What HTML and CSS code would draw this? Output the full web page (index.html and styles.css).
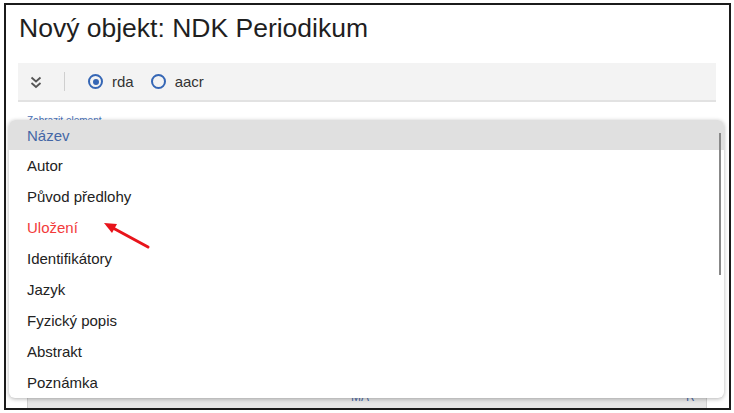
FILE: index.html
```html
<!DOCTYPE html>
<html lang="cs">
<head>
<meta charset="utf-8">
<title>Nový objekt</title>
<link rel="stylesheet" href="styles.css">
</head>
<body>
<div class="frame">
  <h1 class="title">Nový objekt: NDK Periodikum</h1>
  <div class="toolbar">
    <span class="expand">
      <svg width="12" height="13" viewBox="0 0 12 13"><path d="M1.5 1.5 L6 5.5 L10.5 1.5 M1.5 7 L6 11 L10.5 7" fill="none" stroke="#555" stroke-width="1.8"/></svg>
    </span>
    <span class="sep"></span>
    <label class="radio"><span class="dot checked"></span>rda</label>
    <label class="radio"><span class="dot"></span>aacr</label>
  </div>
  <div class="content">
    <a class="link">Zobrazit element</a>
    <div class="table">
      <div class="thead"><span class="th th-wide">MA</span><span class="th th-r">R</span></div>
    </div>
  </div>
  <div class="menu">
    <div class="item head">Název</div>
    <div class="item">Autor</div>
    <div class="item">Původ předlohy</div>
    <div class="item red">Uložení</div>
    <div class="item">Identifikátory</div>
    <div class="item">Jazyk</div>
    <div class="item">Fyzický popis</div>
    <div class="item">Abstrakt</div>
    <div class="item">Poznámka</div>
    <div class="scroll"></div>
  </div>
  <svg class="arrow" width="52" height="32" viewBox="0 0 52 32">
    <line x1="47" y1="28" x2="12" y2="9" stroke="#e8141b" stroke-width="3" stroke-linecap="round"/>
    <path d="M3 4 L16 5 L11 14 Z" fill="#e8141b"/>
  </svg>
</div>
</body>
</html>
```
FILE: styles.css
```css
* { box-sizing: border-box; }
html, body { margin: 0; padding: 0; background: #fff; }
body { font-family: "Liberation Sans", Arial, sans-serif; color: #222; }
.frame {
  position: relative;
  margin: 3px 3px 0 4px;
  width: 727px;
  height: 407px;
  border: 2px solid #1b1b1b;
  padding: 0 13px 0 12px;
  overflow: hidden;
}
.title {
  margin: 0;
  padding: 8px 0 0 1px;
  height: 58px;
  font-size: 26.5px;
  font-weight: normal;
  color: #1f1f1f;
}
.toolbar {
  display: flex;
  align-items: center;
  height: 39px;
  background: #f3f3f3;
  border-bottom: 2px solid #e2e2e2;
  padding-left: 12px;
  font-size: 15px;
  color: #333;
}
.expand { display: flex; width: 14px; margin-top: 1px; }
.sep { width: 1px; height: 19px; background: #cfcfcf; margin: 0 23px 0 20px; }
.radio { display: flex; align-items: center; margin-right: 17px; }
.dot {
  width: 15px; height: 15px; border-radius: 50%;
  border: 2px solid #3566b5; margin-right: 9px; position: relative;
}
.dot.checked::after {
  content: ""; position: absolute; left: 2.5px; top: 2.5px;
  width: 6px; height: 6px; border-radius: 50%; background: #3566b5;
}
.content { padding: 13px 0 0 9px; }
.link { display: block; font-size: 10px; color: #4a72b8; height: 20px; }
.table {
  margin-top: 254px;
  margin-right: 9px;
  border-left: 1px solid #d0d0d0;
  border-right: 1px solid #d0d0d0;
  height: 40px;
}
.thead {
  display: flex; height: 20px; background: #e6e6e6;
  font-size: 12px; color: #4a6aa8; padding-top: 1px;
}
.th-wide { flex: 1; text-align: center; padding-left: 6px; }
.th-r { width: 20px; }
.menu {
  position: absolute;
  left: 3px; top: 115px;
  width: 715px; height: 278px;
  background: #fff;
  border-radius: 6px;
  box-shadow: 0 1px 4px rgba(0,0,0,0.3);
  overflow: hidden;
  font-size: 15px;
}
.item {
  height: 31px;
  display: flex; align-items: center;
  padding-left: 18px;
  color: #222;
}
.item.head { height: 30px; background: #e0e0e0; color: #4467a6; }
.item.red { color: #f23b3b; }
.scroll {
  position: absolute; right: 3px; top: 13px;
  width: 2px; height: 142px; background: #888;
}
.arrow { position: absolute; left: 95px; top: 214px; }
```
